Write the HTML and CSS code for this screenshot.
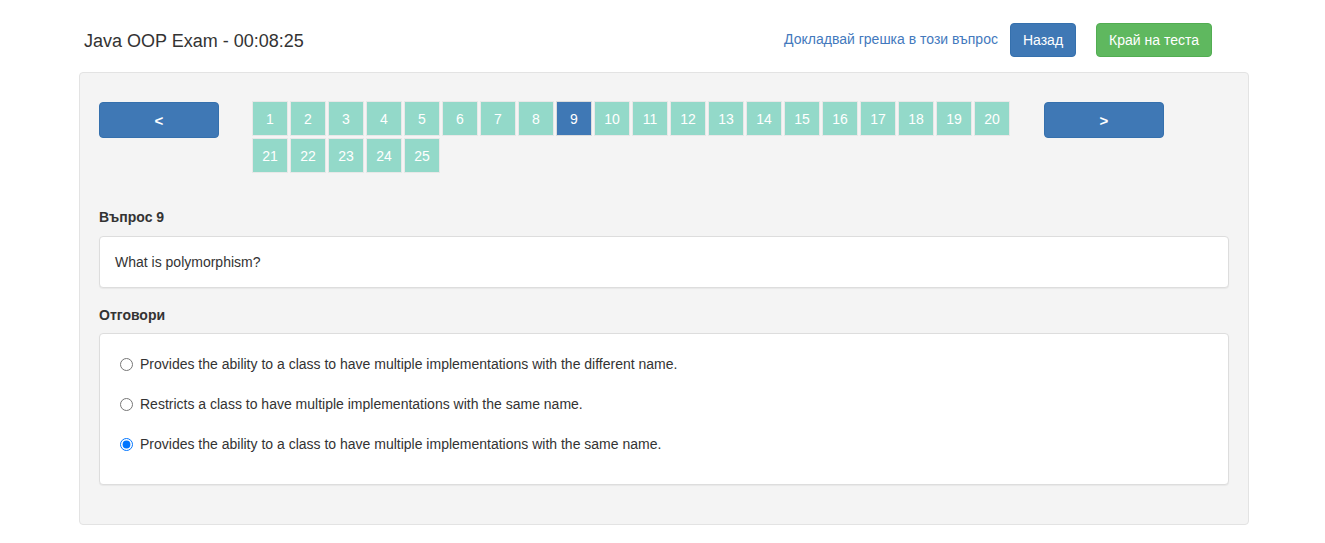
FILE: index.html
```html
<!DOCTYPE html>
<html lang="bg">
<head>
<meta charset="utf-8">
<title>Java OOP Exam</title>
<link rel="stylesheet" href="styles.css">
</head>
<body>
<div class="page">
  <header class="topbar">
    <h1 class="title">Java OOP Exam - 00:08:25</h1>
    <div class="actions">
      <a class="report-link" href="#">Докладвай грешка в този въпрос</a>
      <button class="btn btn-primary">Назад</button>
      <button class="btn btn-success">Край на теста</button>
    </div>
  </header>

  <main class="well">
    <nav class="pager">
      <button class="nav-btn">&lt;</button>
      <div class="numbers">
        <span class="num">1</span><span class="num">2</span><span class="num">3</span><span class="num">4</span><span class="num">5</span><span class="num">6</span><span class="num">7</span><span class="num">8</span><span class="num current">9</span><span class="num">10</span>
        <span class="num">11</span><span class="num">12</span><span class="num">13</span><span class="num">14</span><span class="num">15</span><span class="num">16</span><span class="num">17</span><span class="num">18</span><span class="num">19</span><span class="num">20</span>
        <span class="num">21</span><span class="num">22</span><span class="num">23</span><span class="num">24</span><span class="num">25</span>
      </div>
      <button class="nav-btn">&gt;</button>
    </nav>

    <h2 class="label q-label">Въпрос 9</h2>
    <div class="panel question">What is polymorphism?</div>

    <h2 class="label a-label">Отговори</h2>
    <div class="panel answers">
      <label class="answer"><input type="radio" name="a"><span>Provides the ability to a class to have multiple implementations with the different name.</span></label>
      <label class="answer"><input type="radio" name="a"><span>Restricts a class to have multiple implementations with the same name.</span></label>
      <label class="answer"><input type="radio" name="a" checked><span>Provides the ability to a class to have multiple implementations with the same name.</span></label>
    </div>
  </main>
</div>
</body>
</html>
```

FILE: styles.css
```css
* { box-sizing: border-box; }

html, body {
  margin: 0;
  padding: 0;
  background: #fff;
  font-family: "Liberation Sans", Arial, sans-serif;
  color: #333;
  font-size: 14px;
}

.page {
  width: 1170px;
  margin-left: 79px;
}

.topbar {
  display: flex;
  align-items: flex-start;
  justify-content: space-between;
  padding: 23px 37px 0 5px;
  height: 72px;
}

.title {
  margin: 0;
  padding-top: 3px;
  font-size: 18px;
  font-weight: normal;
  line-height: 31px;
  color: #333;
}

.actions {
  display: flex;
  align-items: center;
}

.report-link {
  color: #4379bd;
  text-decoration: none;
  font-size: 14px;
  margin-right: 12px;
  padding-bottom: 2px;
}

.btn {
  height: 34px;
  padding: 0 12px;
  font-family: inherit;
  font-size: 14px;
  color: #fff;
  border-radius: 4px;
  border: 1px solid transparent;
  cursor: pointer;
}

.btn-primary {
  background: #3f78b5;
  border-color: #3570ad;
  margin-right: 20px;
}

.btn-success {
  background: #5fb85f;
  border-color: #52ad52;
}

.well {
  background: #f4f4f4;
  border: 1px solid #e3e3e3;
  border-radius: 4px;
  padding: 28px 19px 39px;
}

.pager {
  display: flex;
  align-items: flex-start;
}

.nav-btn {
  width: 120px;
  height: 36px;
  margin-top: 1px;
  background: #3f78b5;
  border: 1px solid #3570ad;
  border-radius: 4px;
  color: #fff;
  font-family: inherit;
  font-size: 15px;
  font-weight: bold;
  cursor: pointer;
}

.numbers {
  width: 758px;
  display: flex;
  flex-wrap: wrap;
  gap: 2px;
  margin: 0 34px 0 33px;
}

.num {
  width: 36px;
  height: 35px;
  display: flex;
  align-items: center;
  justify-content: center;
  background: #93d9c9;
  border: 1px solid #e8e8e8;
  color: #fff;
  font-size: 14px;
}

.num.current {
  background: #3f78b5;
  border-color: #dcdcdc;
}

.label {
  margin: 0;
  font-size: 14px;
  font-weight: bold;
  line-height: 20px;
  height: 20px;
  color: #333;
}

.q-label {
  margin-top: 34px;
  margin-bottom: 9px;
}

.a-label {
  margin-bottom: 8px;
}

.panel {
  background: #fff;
  border: 1px solid #dddddd;
  border-radius: 4px;
  box-shadow: 0 1px 1px rgba(0, 0, 0, 0.05);
}

.question {
  padding: 0 15px;
  height: 52px;
  line-height: 50px;
  margin-bottom: 17px;
}

.answers {
  height: 152px;
  padding: 20px 20px 0;
  display: flex;
  flex-direction: column;
  gap: 20px;
}

.answer {
  display: flex;
  align-items: center;
  gap: 7px;
  height: 20px;
  line-height: 20px;
  cursor: pointer;
}

.answer input {
  margin: 0;
  width: 13px;
  height: 13px;
}
```
